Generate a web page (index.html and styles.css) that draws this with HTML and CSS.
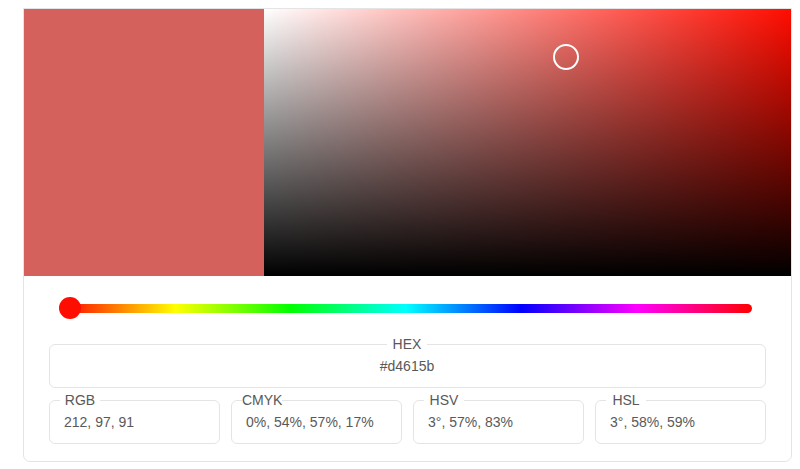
FILE: index.html
```html
<!DOCTYPE html>
<html lang="en">
<head>
  <meta charset="UTF-8" />
  <meta name="viewport" content="width=device-width, initial-scale=1.0"/>
  <title>Color Picker</title>
  <link rel="stylesheet" href="styles.css">
</head>
<body>

  <div class="picker">
    <div class="picker-top">
      <div class="swatch"></div>
      <div class="saturation">
        <span class="sat-pointer" style="left: 57.4%; top: 18%"></span>
      </div>
    </div>

    <div class="picker-controls">
      <div class="hue">
        <div class="hue-track"></div>
        <span class="hue-thumb" style="left: 10px"></span>
      </div>

      <fieldset class="field field-hex">
        <legend><span>HEX</span></legend>
        <div class="field-value">#d4615b</div>
      </fieldset>

      <div class="field-row">
        <fieldset class="field">
          <legend><span>RGB</span></legend>
          <div class="field-value">212, 97, 91</div>
        </fieldset>
        <fieldset class="field">
          <legend><span>CMYK</span></legend>
          <div class="field-value">0%, 54%, 57%, 17%</div>
        </fieldset>
        <fieldset class="field">
          <legend><span>HSV</span></legend>
          <div class="field-value">3°, 57%, 83%</div>
        </fieldset>
        <fieldset class="field">
          <legend><span>HSL</span></legend>
          <div class="field-value">3°, 58%, 59%</div>
        </fieldset>
      </div>
    </div>
  </div>

</body>
</html>
```

FILE: styles.css
```css
:root {
  --hue-color: hsl(3, 100%, 50%);
  --current-color: #d4615b;
  --border-color: #e4e4e4;
  --text-color: #595959;
}

body {
  margin: 0;
  background-color: #fff;
  font-family: "Liberation Sans", Arial, sans-serif;
  color: var(--text-color);
}

.picker {
  margin: 8px 8px 0 23px;
  border: 1px solid var(--border-color);
  border-radius: 0 0 7px 7px;
  background-color: #fff;
}

.picker-top {
  display: flex;
  height: 267px;
}

.swatch {
  width: 240px;
  background-color: var(--current-color);
}

.saturation {
  flex: 1;
  position: relative;
  background:
    linear-gradient(to top, #000, rgba(0, 0, 0, 0)),
    linear-gradient(to right, #fff, var(--hue-color));
}

.sat-pointer {
  position: absolute;
  width: 22px;
  height: 22px;
  border: 2.5px solid #fff;
  border-radius: 50%;
  transform: translate(-50%, -50%);
}

.picker-controls {
  padding: 21px 25px 17px;
}

.hue {
  position: relative;
  display: flex;
  align-items: center;
  height: 22px;
  margin: 0 14px 0 11px;
}

.hue-track {
  flex: 1;
  height: 9px;
  border-radius: 5px;
  background: linear-gradient(to right,
    #f00 0%, #ff0 16.66%, #0f0 33.33%, #0ff 50%,
    #00f 66.66%, #f0f 83.33%, #f00 100%);
}

.hue-thumb {
  position: absolute;
  top: 0;
  width: 22px;
  height: 22px;
  border-radius: 50%;
  background-color: var(--hue-color);
  transform: translateX(-50%);
}

.field {
  margin: 0;
  min-width: 0;
  padding: 6px 15px 13px 14px;
  border: 1px solid var(--border-color);
  border-radius: 6px;
  font-size: 14px;
}

.field legend {
  padding: 0;
  margin-left: -4px;
  line-height: 16px;
  text-align: left;
}

.field legend span {
  display: inline-block;
  width: 40px;
  text-align: center;
}

.field-hex {
  margin-top: 17px;
  text-align: center;
}

.field-hex legend {
  margin: 0 auto;
  text-align: center;
}

.field-value {
  line-height: 16px;
  white-space: nowrap;
}

.field-row {
  display: grid;
  grid-template-columns: repeat(4, 1fr);
  column-gap: 11px;
  margin-top: 4px;
}
```
